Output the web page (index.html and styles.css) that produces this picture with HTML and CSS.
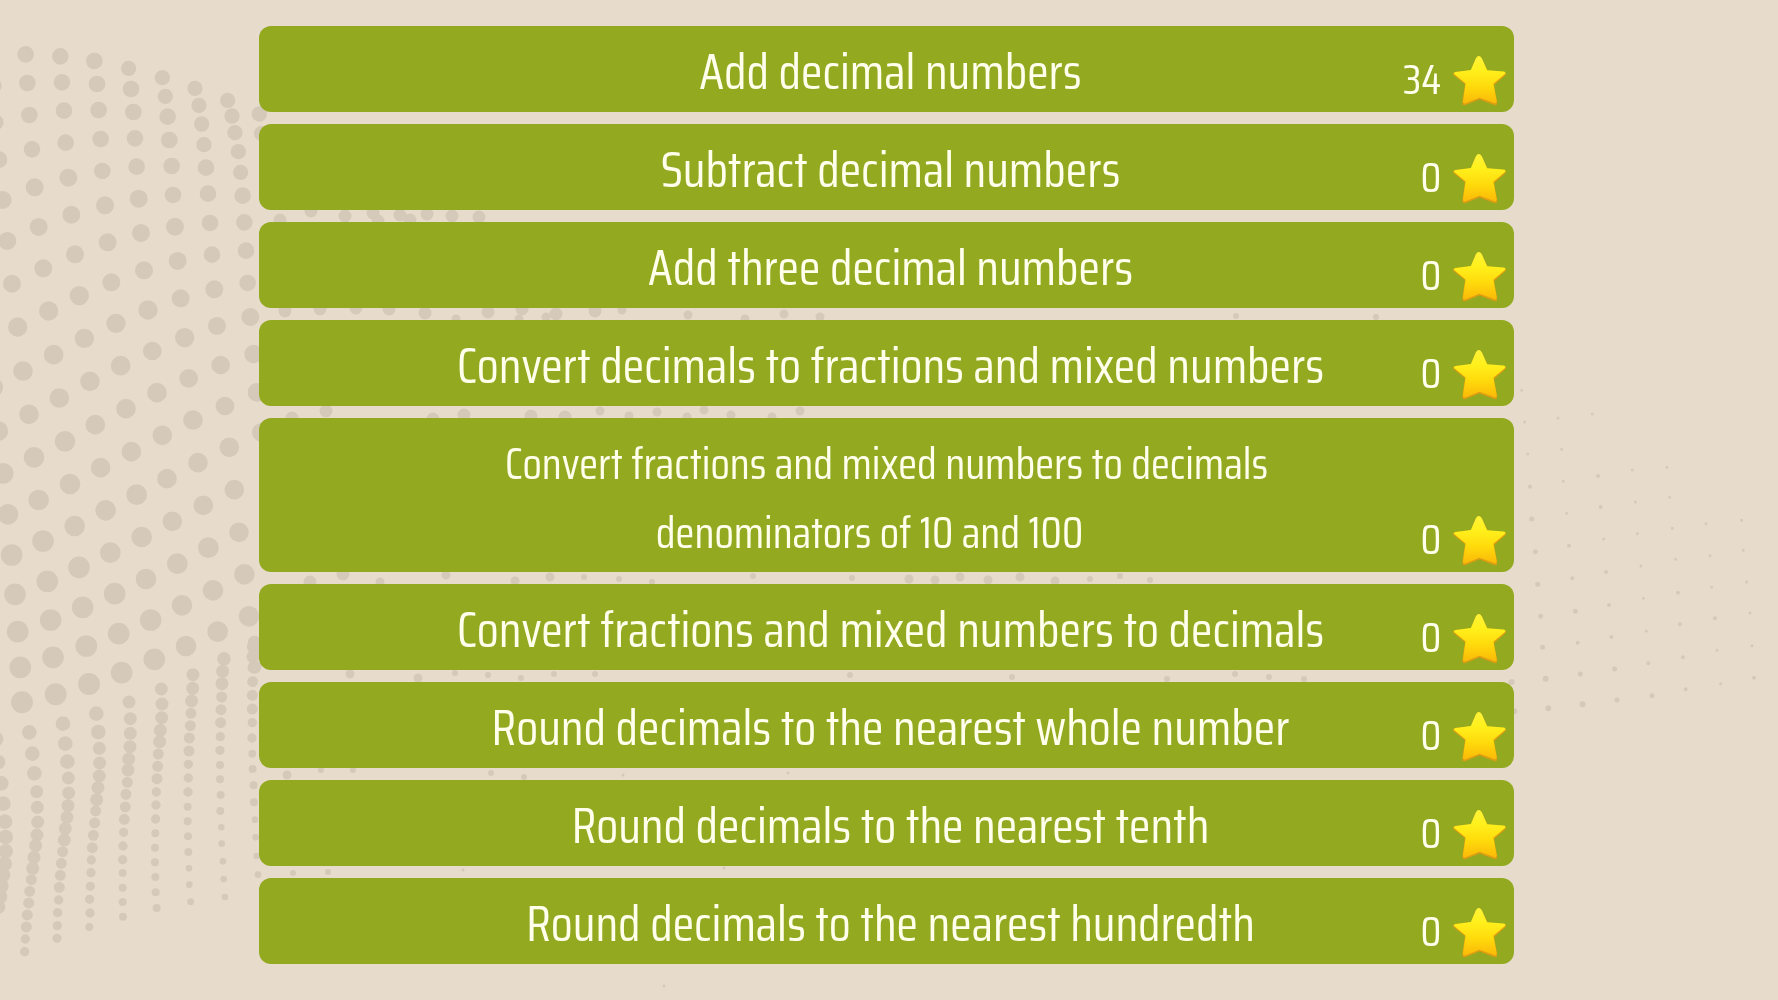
FILE: index.html
```html
<!DOCTYPE html>
<html lang="en">
<head>
<meta charset="utf-8">
<meta name="viewport" content="width=device-width, initial-scale=1">
<title>Decimal skills</title>
<link rel="stylesheet" href="styles.css">
</head>
<body>
<svg class="backdrop" viewBox="0 0 1778 1000" preserveAspectRatio="xMidYMid slice" aria-hidden="true">
  <!-- upper left wave -->
  <g transform="scale(.3333)">
    <path stroke-width="46" d="M386 205h0M487 233h0M585 265h0M683 301h0M696 348h0M597 316h0M496 289h0M705 398h0M605 372h0M715 455h0M-18 257h0M-12 367h0M612 434h0M722 517h0M778 342h0M785 400h0"/>
    <path stroke-width="50" d="M77 163h0M181 169h0M283 183h0M82 249h0M186 247h0M291 252h0M393 267h0M88 345h0M192 332h0M296 330h0M400 336h0M503 350h0M508 420h0M405 415h0M302 417h0M197 428h0M96 448h0M-3 479h0M410 500h0M515 498h0M618 503h0M307 513h0M728 587h0M624 581h0M519 585h0M733 667h0M630 669h0M738 752h0M743 849h0M636 764h0"/>
    <path stroke-width="54" d="M205 533h0M104 562h0M8 600h0M416 596h0M315 616h0M214 644h0M116 681h0M22 723h0M525 680h0M423 699h0M323 727h0M225 763h0M130 805h0M36 851h0M533 783h0M432 811h0M334 847h0M643 868h0M542 895h0M751 951h0M651 978h0"/>
    <path stroke-width="58" d="M238 887h0M146 933h0M53 981h0M444 930h0M348 970h0M253 1015h0M554 1013h0"/>
  </g>
  <!-- middle left wave -->
  <g transform="translate(0 330) scale(.3333)">
    <path stroke-width="56" d="M457 63h0M662 105h0M566 145h0M675 228h0M761 72h0M771 187h0M784 307h0"/>
    <path stroke-width="59" d="M161 74h0M69 123h0M-20 172h0M362 107h0M270 154h0M178 204h0M87 253h0M-5 303h0M471 188h0M378 236h0M286 284h0M579 270h0M487 316h0M394 365h0M302 413h0M688 352h0M594 398h0M501 446h0M703 479h0M610 526h0M717 607h0M517 574h0"/>
    <path stroke-width="62" d="M195 334h0M102 382h0M10 430h0M210 462h0M116 510h0M410 494h0M317 541h0M224 588h0M24 553h0M425 621h0M331 668h0M625 653h0M532 701h0M438 747h0M733 733h0M639 781h0M546 826h0M747 859h0M653 905h0M558 948h0"/>
    <path stroke-width="65" d="M129 633h0M35 675h0M237 712h0M142 754h0M45 793h0M344 791h0M248 832h0M152 870h0M53 905h0M452 870h0M356 911h0M259 948h0M159 982h0M463 988h0M61 1012h0M365 1028h0"/>
    <path stroke-width="40" d="M672 987h0M764 937h0M764 974h0M764 1011h0"/>
  </g>
  <!-- lower left strands -->
  <g transform="translate(0 640) scale(.3333)">
    <path stroke-width="66" d="M66 187h0M167 163h0M267 132h0"/>
    <path stroke-width="44" d="M88 277h0M97 341h0M103 400h0M189 251h0M196 311h0M202 365h0M289 221h0M295 276h0M-12 297h0M-6 366h0M4 430h0M10 491h0M15 545h0M17 591h0M17 634h0M14 672h0M9 705h0M4 738h0M0 770h0M-6 800h0"/>
    <path stroke-width="39" d="M110 455h0M112 502h0M113 546h0M111 585h0M107 617h0M102 652h0M98 685h0M205 414h0M206 459h0M204 497h0M201 532h0M196 566h0M193 600h0M298 325h0M299 369h0M298 408h0M294 443h0M290 479h0M387 186h0M391 236h0M391 280h0M390 320h0M386 357h0M384 390h0M484 147h0M486 192h0M485 233h0M481 271h0M479 305h0M579 104h0M578 145h0M575 183h0M672 56h0M668 94h0M666 131h0M760 20h0M759 50h0"/>
    <path stroke-width="33" d="M94 719h0M89 754h0M86 789h0M82 825h0M79 861h0M188 635h0M184 670h0M181 706h0M178 742h0M287 513h0M284 549h0M280 586h0M277 623h0M382 427h0M378 463h0M376 501h0M373 538h0M475 342h0M473 379h0M471 416h0M573 220h0M571 257h0M568 294h0M567 333h0M665 171h0M663 209h0M662 248h0M759 83h0M758 125h0M757 166h0M757 207h0"/>
    <path stroke-width="28" d="M76 897h0M74 935h0M176 780h0M173 818h0M172 857h0M171 895h0M274 660h0M273 698h0M271 739h0M269 778h0M270 819h0M371 577h0M369 618h0M368 659h0M469 456h0M468 495h0M467 537h0M565 373h0M565 414h0M564 456h0M661 290h0M660 331h0M757 248h0M756 294h0"/>
    <path stroke-width="24" d="M268 861h0M368 699h0M368 743h0M368 786h0M369 830h0M466 580h0M465 623h0M465 667h0M466 711h0M467 757h0M470 804h0M563 500h0M563 544h0M564 589h0M565 636h0M660 375h0M660 418h0M662 465h0M661 513h0M757 341h0M758 387h0M761 436h0M762 487h0"/>
    <path stroke-width="20" d="M567 685h0M568 734h0M572 785h0M664 562h0M665 611h0M669 664h0M671 717h0M675 771h0M765 539h0M767 592h0M770 648h0M774 704h0"/>
  </g>
  <!-- dots passing behind the list -->
  <path stroke-width="13" d="M280 220h0M311 211h0M345 216h0M373 213h0M378 221h0M400 215h0M410 220h0M427 214h0M452 216h0M479 217h0M285 311h0M320 309h0M356 308h0M389 309h0M425 313h0M488 312h0M522 309h0M556 314h0M595 311h0M292 418h0M326 411h0M433 419h0M464 415h0M531 416h0M565 417h0M310 582h0M343 574h0"/>
  <path stroke-width="9" d="M456 319h0M519 319h0M546 317h0M622 310h0M688 315h0M745 319h0M784 314h0M820 317h0M600 411h0M629 416h0M657 412h0M687 417h0M704 410h0M731 415h0M772 417h0M800 411h0M380 582h0M446 575h0M515 581h0M550 577h0M909 579h0M935 580h0M960 577h0M988 580h0M1020 577h0M1055 581h0M350 674h0M418 678h0M287 775h0"/>
  <path stroke-width="6" d="M584 577h0M619 579h0M652 582h0M753 576h0M852 578h0M1090 579h0M1120 576h0M1150 580h0M1236 316h0M1376 317h0M455 673h0M488 675h0M521 678h0M554 674h0M595 674h0M850 675h0M1012 677h0M1167 679h0M1235 674h0M1269 677h0M1304 679h0M321 770h0M353 770h0M491 773h0M524 777h0M293 873h0M328 872h0"/>
  <path stroke-width="3" d="M623 775h0M788 773h0M463 870h0M724 868h0M664 986h0"/>
  <!-- right-hand spray -->
  <g transform="translate(1480 370) scale(.3333)">
    <path stroke-width="9" d="M125 61h0M134 156h0M234 144h0M337 132h0M143 252h0M245 238h0M250 334h0M457 300h0M561 292h0M569 382h0M466 396h0M577 475h0M472 491h0M678 461h0M785 451h0M790 541h0M690 557h0M587 568h0M483 588h0M371 507h0M260 430h0M695 652h0M800 636h0M490 685h0M810 729h0M816 827h0M711 841h0M499 783h0M722 941h0"/>
    <path stroke-width="12" d="M150 350h0M354 318h0M362 411h0M267 527h0M378 606h0M277 625h0M594 668h0M387 705h0M705 745h0M600 763h0M394 801h0M293 818h0M505 880h0M609 862h0M822 923h0M617 958h0"/>
    <path stroke-width="15" d="M155 447h0M166 545h0M173 643h0M182 739h0M286 724h0M188 832h0M301 912h0M404 897h0M516 977h0M411 990h0"/>
    <path stroke-width="18" d="M197 926h0M205 1015h0M308 1003h0M95 936h0M103 1024h0"/>
  </g>
</svg>

<svg class="defs" width="0" height="0" aria-hidden="true">
  <defs>
    <linearGradient id="gold" x1="0" y1="0" x2="0" y2="1">
      <stop offset="0" stop-color="#fff23a"/>
      <stop offset=".3" stop-color="#fff01c"/>
      <stop offset=".62" stop-color="#ffdc0c"/>
      <stop offset="1" stop-color="#fab908"/>
    </linearGradient>
    <symbol id="star" viewBox="218 135 160 152">
      <path fill="#dd9d12" d="M287 145Q296 129 305 145L322 180L372 186Q382 188 376 195L342 225L352 279Q351 288 342 285L298 268L256 285Q246 288 246 278L254 222L221 196Q214 188 224 185L272 180Z"/>
      <path fill="url(#gold)" d="M287 144Q296 130 305 144L321 180L371 184Q380 186 374 192L340 221L350 274Q349 283 341 279L298 263L257 280Q248 283 248 274L256 220L223 193Q217 187 226 185L272 179Z"/>
    </symbol>
  </defs>
</svg>

<main class="page">
  <ul class="skills">
    <li><button class="skill" type="button"><span class="title">Add decimal numbers</span><span class="score">34<svg class="star" aria-hidden="true"><use href="#star"/></svg></span></button></li>
    <li><button class="skill" type="button"><span class="title">Subtract decimal numbers</span><span class="score">0<svg class="star" aria-hidden="true"><use href="#star"/></svg></span></button></li>
    <li><button class="skill" type="button"><span class="title">Add three decimal numbers</span><span class="score">0<svg class="star" aria-hidden="true"><use href="#star"/></svg></span></button></li>
    <li><button class="skill" type="button"><span class="title">Convert decimals to fractions and mixed numbers</span><span class="score">0<svg class="star" aria-hidden="true"><use href="#star"/></svg></span></button></li>
    <li><button class="skill" type="button"><span class="title title-long">Convert fractions and mixed numbers to decimals <span class="detail">denominators of 10 and 100</span></span><span class="score">0<svg class="star" aria-hidden="true"><use href="#star"/></svg></span></button></li>
    <li><button class="skill" type="button"><span class="title">Convert fractions and mixed numbers to decimals</span><span class="score">0<svg class="star" aria-hidden="true"><use href="#star"/></svg></span></button></li>
    <li><button class="skill" type="button"><span class="title">Round decimals to the nearest whole number</span><span class="score">0<svg class="star" aria-hidden="true"><use href="#star"/></svg></span></button></li>
    <li><button class="skill" type="button"><span class="title">Round decimals to the nearest tenth</span><span class="score">0<svg class="star" aria-hidden="true"><use href="#star"/></svg></span></button></li>
    <li><button class="skill" type="button"><span class="title">Round decimals to the nearest hundredth</span><span class="score">0<svg class="star" aria-hidden="true"><use href="#star"/></svg></span></button></li>
  </ul>
</main>
</body>
</html>
```
FILE: styles.css
```css
* {
  box-sizing: border-box;
}

body {
  margin: 0;
  background: #e7dccb;
  font-family: "Saira Condensed", "Saira Extra Condensed", "Roboto Condensed", "Liberation Sans", sans-serif;
}

.backdrop {
  position: fixed;
  inset: 0;
  z-index: -1;
  width: 100%;
  height: 100%;
  fill: none;
  stroke: #d5cab9;
  stroke-linecap: round;
}

.defs {
  position: absolute;
}

.page {
  padding: 26px calc(15% - 3px) 36px calc(15% - 8px);
}

.skills {
  display: flex;
  flex-direction: column;
  gap: 12px;
  margin: 0;
  padding: 0;
  list-style: none;
}

.skills li {
  display: flex;
}

.skill {
  display: grid;
  flex: 1;
  padding: 0;
  border: 0;
  border-radius: 12px;
  background: #92a920;
  color: #ffffec;
  font: inherit;
  cursor: pointer;
}

.title,
.score {
  grid-area: 1 / 1;
}

.title {
  padding: 8px 120px 2px 128px;
  font-size: 50px;
  line-height: 76px;
}

.title-long {
  padding: 11px 120px 5px;
  font-size: 44px;
  line-height: 69px;
}

.detail {
  display: block;
  padding-right: 34px;
}

.score {
  display: flex;
  align-items: flex-end;
  align-self: end;
  justify-self: end;
  gap: 12px;
  padding: 0 8px 6px 0;
  font-size: 43px;
  line-height: 53px;
}

.star {
  width: 53px;
  height: 51px;
}
```
